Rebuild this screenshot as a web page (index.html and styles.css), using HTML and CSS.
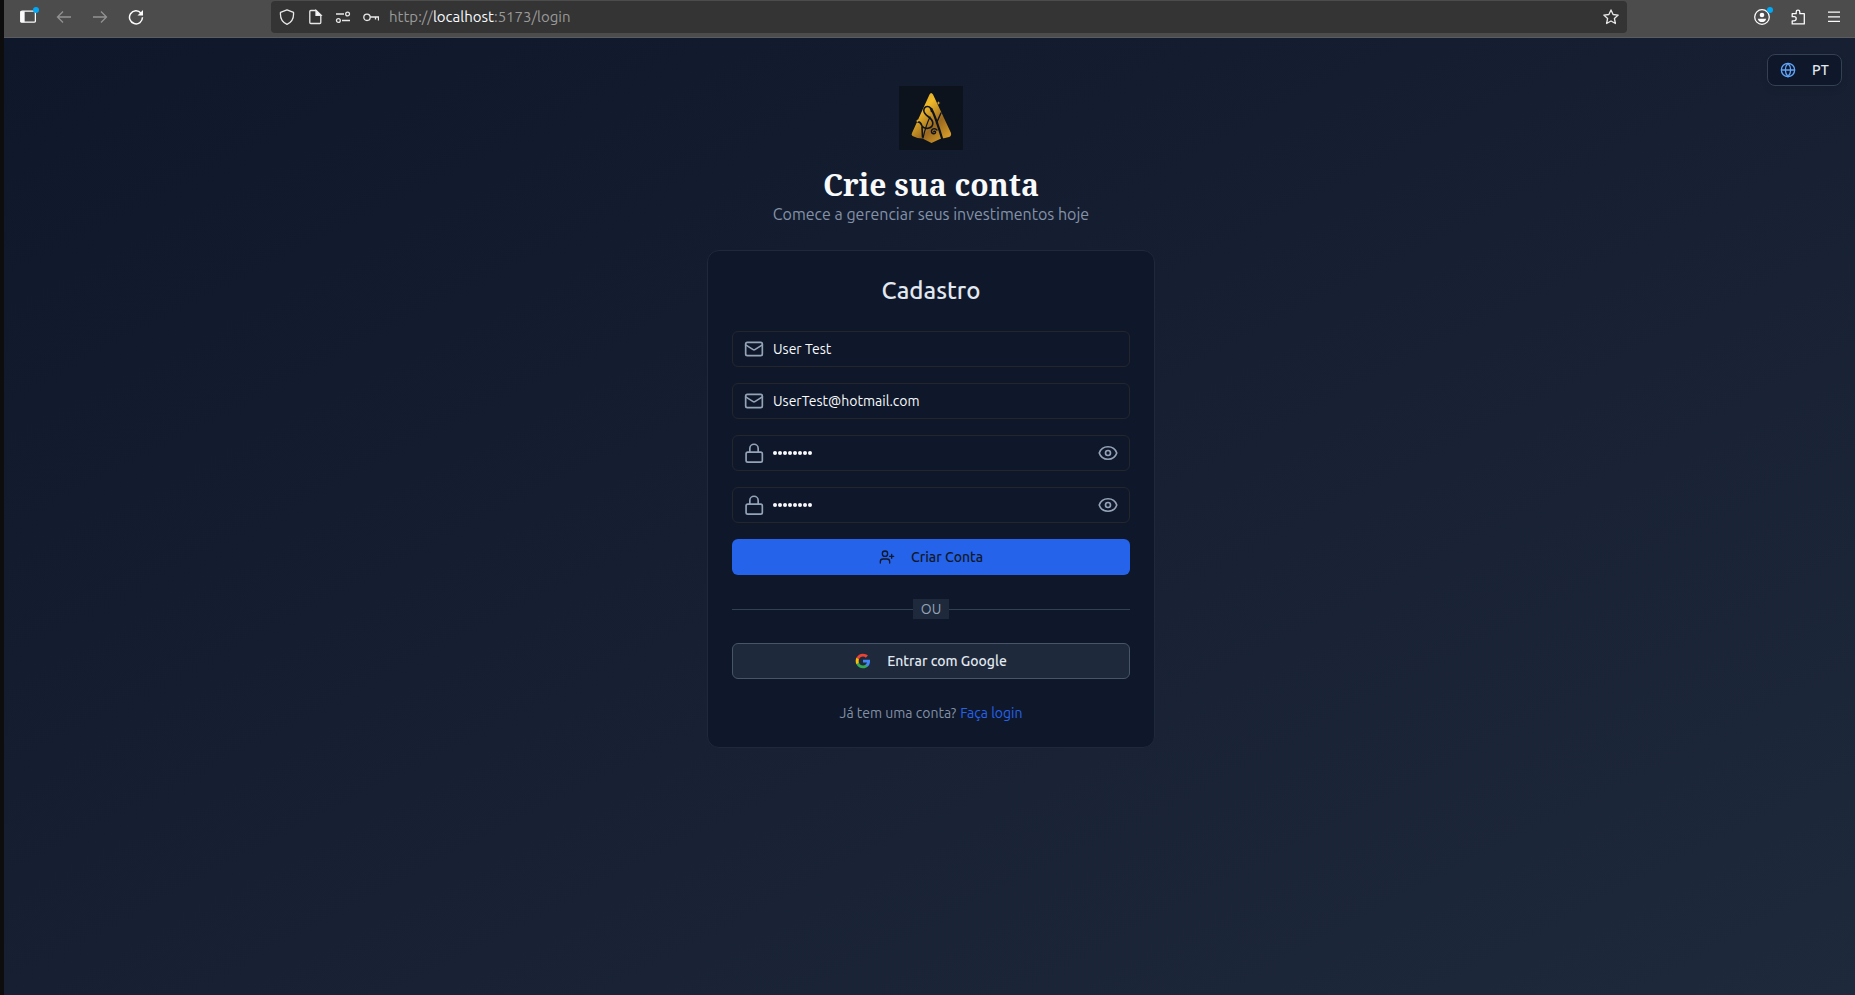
FILE: index.html
```html
<!DOCTYPE html>
<html lang="pt">
<head>
<meta charset="utf-8">
<title>Crie sua conta</title>
<link rel="stylesheet" href="styles.css">
</head>
<body>
<div class="window">
  <header class="toolbar">
    <nav class="nav">
      <span class="dot-wrap"><svg class="ico" viewBox="0 0 16 16" fill="none" stroke="#fbfbfe" stroke-width="1.3"><rect x=".8" y="2.2" width="14.6" height="11" rx="1.3"/><path d="M1 3h3v9.500H1z" fill="#fbfbfe"/></svg><i class="dot"></i></span>
      <svg class="ico dim" viewBox="0 0 16 16"><path d="M15 8H1.500M7 2.500 1.500 8 7 13.500"/></svg>
      <svg class="ico dim" viewBox="0 0 16 16"><path d="M1 8h13.500M9 2.500 14.500 8 9 13.500"/></svg>
      <svg class="ico" viewBox="0 0 16 16"><path d="M13 4.200A6.500 6.500 0 1 0 14.500 8.300" stroke-width="1.500"/><path d="M15 1v5.500H9.500z" fill="#fbfbfe" stroke="none"/></svg>
    </nav>
    <div class="urlbar">
      <svg class="ico" viewBox="0 0 16 16"><path d="M8 .8 14.500 3.400C15 9 12.500 13.500 8 15.400 3.500 13.500 1 9 1.500 3.400z" stroke-linejoin="round"/></svg>
      <svg class="ico" viewBox="0 0 16 16"><path d="M3.800 1.500H9L13.800 6v7.500q0 1-1 1h-9q-1 0-1-1v-11q0-1 1-1z"/><path d="M9 1.500V6.300h5z" fill="#fbfbfe"/></svg>
      <svg class="ico" viewBox="0 0 16 16"><path d="M1 5h8M7 11.500h8"/><circle cx="12.600" cy="5" r="1.900"/><circle cx="3.400" cy="11.500" r="1.900"/></svg>
      <svg class="ico" viewBox="0 0 16 16"><circle cx="4" cy="8.300" r="3.200"/><path d="M7.200 8h8.300v3.500M12.500 8v2.500"/></svg>
      <span class="url">http://<b>localhost</b>:5173/login</span>
      <svg class="ico star" viewBox="0 0 16 16"><path d="m8 .9 2.100 4.600 5.100.6-3.800 3.400 1 5L8 12l-4.400 2.500 1-5L.8 6.100l5.100-.6z" stroke-linejoin="round"/></svg>
    </div>
    <div class="tools">
      <span class="dot-wrap"><svg class="ico" viewBox="0 0 16 16"><circle cx="8" cy="8" r="7.300"/><circle cx="8" cy="6" r="2.300" fill="#fbfbfe" stroke="none"/><path d="M3.800 9.700h8.400q-.8 3.400-4.200 3.400T3.800 9.700z" fill="#fbfbfe" stroke="none"/></svg><i class="dot"></i></span>
      <svg class="ico" viewBox="0 0 16 16"><path d="M2.200 7V4.700h4V3a1.800 1.800 0 0 1 3.600 0v1.700h4.500v10.200H2.200v-3h1.900a2 2 0 0 0 0-4.200H2.200z" stroke-linejoin="round"/></svg>
      <svg class="ico" viewBox="0 0 16 16"><path d="M2 3.200h12M2 7.800h12M2 12.400h12"/></svg>
    </div>
  </header>
  <main class="page">
    <button class="lang"><svg viewBox="0 0 24 24"><circle cx="12" cy="12" r="10"/><path d="M12 2a14.500 14.500 0 0 0 0 20 14.500 14.500 0 0 0 0-20M2 12h20"/></svg><span>PT</span></button>
    <svg class="logo" viewBox="0 0 64 64">
      <defs><linearGradient id="gold" x1="0" y1="0" x2=".75" y2="1"><stop offset="0" stop-color="#d4a12a"/><stop offset=".35" stop-color="#efb92a"/><stop offset=".7" stop-color="#9a6820"/><stop offset="1" stop-color="#d39a29"/></linearGradient></defs>
      <rect width="64" height="64" fill="#0c131c"/>
      <path d="M30.500 8.500Q32 5.500 34 8.500L52 47q.7 3-2 4l-4 1-5 1-8.500 4-9-4.500-5-.500-5-2q-1.500-1-.5-3z" fill="url(#gold)"/>
      <g fill="none" stroke="#0c131c" stroke-linecap="round"><path d="M32.500 25.500C32 19 25 19 24.800 24.500 24.800 30 33.500 31 33.800 37 34 43 25 44 22.800 39.500 22 37.500 20.500 35.500 18.500 36" stroke-width="1.600"/><path d="M31 31Q27 39 24 52" stroke-width="1.200"/><path d="M23 41l.5 10" stroke-width="1.600"/><path d="M32.500 23Q37 32 43.500 54" stroke-width="2.200"/><path d="M42 27l-4.500 10M38 44c-2-2.500-6-1-5.500 2 .5 2.500 4.500 2 4 0-.3-1-1.500-1-1.800-.2" stroke-width="1.400"/></g>
      <path d="m39.500 15 .4 1.600 1.600.4-1.600.4-.4 1.600-.4-1.600-1.600-.4 1.600-.4zM18.500 33l.4 1.600 1.600.4-1.600.4-.4 1.600-.4-1.600-1.600-.4 1.600-.4z" fill="#e6b34a"/>
    </svg>
    <h1 class="title"><span>Crie sua conta</span></h1>
    <p class="subtitle"><span>Comece a gerenciar seus investimentos hoje</span></p>
    <section class="card">
      <h2 class="heading"><span>Cadastro</span></h2>
      <div class="field"><svg class="fi" viewBox="0 0 24 24"><rect x="2" y="4" width="20" height="16" rx="2"/><path d="m22 7-8.970 5.700a1.940 1.940 0 0 1-2.060 0L2 7"/></svg><span>User Test</span></div>
      <div class="field"><svg class="fi" viewBox="0 0 24 24"><rect x="2" y="4" width="20" height="16" rx="2"/><path d="m22 7-8.970 5.700a1.940 1.940 0 0 1-2.060 0L2 7"/></svg><span>UserTest@hotmail.com</span></div>
      <div class="field"><svg class="fi" viewBox="0 0 24 24"><rect x="2.500" y="11" width="19.500" height="12" rx="2"/><path d="M7 11V6.500a5 5 0 0 1 10 0V11"/></svg><span class="dots"><i></i><i></i><i></i><i></i><i></i><i></i><i></i><i></i></span><svg class="fi eye" viewBox="0 0 24 24"><path d="M1.500 12C3 7.500 7 4.500 12 4.500S21 7.500 22.500 12C21 16.500 17 19.500 12 19.500S3 16.500 1.500 12z"/><circle cx="12" cy="12" r="3"/></svg></div>
      <div class="field"><svg class="fi" viewBox="0 0 24 24"><rect x="2.500" y="11" width="19.500" height="12" rx="2"/><path d="M7 11V6.500a5 5 0 0 1 10 0V11"/></svg><span class="dots"><i></i><i></i><i></i><i></i><i></i><i></i><i></i><i></i></span><svg class="fi eye" viewBox="0 0 24 24"><path d="M1.500 12C3 7.500 7 4.500 12 4.500S21 7.500 22.500 12C21 16.500 17 19.500 12 19.500S3 16.500 1.500 12z"/><circle cx="12" cy="12" r="3"/></svg></div>
      <button class="btn primary"><svg viewBox="0 0 24 24"><path d="M16 21v-2a4 4 0 0 0-4-4H6a4 4 0 0 0-4 4v2M19 8v6M22 11h-6"/><circle cx="9" cy="7" r="4"/></svg><span>Criar Conta</span></button>
      <div class="divider"><span>OU</span></div>
      <button class="btn google"><svg viewBox="0 0 24 24"><path d="M22.560 12.250c0-.78-.07-1.530-.2-2.250H12v4.260h5.920c-.26 1.370-1.040 2.530-2.210 3.310v2.770h3.570c2.080-1.920 3.280-4.740 3.280-8.090z" fill="#4285f4"/><path d="M12 23c2.970 0 5.460-.98 7.280-2.660l-3.570-2.770c-.98.66-2.230 1.060-3.710 1.060-2.860 0-5.290-1.930-6.160-4.530H2.180v2.840C3.990 20.530 7.700 23 12 23z" fill="#34a853"/><path d="M5.840 14.090c-.22-.66-.35-1.360-.35-2.090s.13-1.430.35-2.090V7.070H2.180C1.430 8.550 1 10.220 1 12s.43 3.450 1.180 4.930z" fill="#fbbc05"/><path d="M12 5.380c1.620 0 3.060.56 4.210 1.640l3.150-3.150C17.450 2.090 14.970 1 12 1 7.700 1 3.990 3.470 2.180 7.070l3.660 2.840c.87-2.600 3.300-4.530 6.160-4.530z" fill="#ea4335"/></svg><span>Entrar com Google</span></button>
      <p class="foot"><span>Já tem uma conta?</span><a>Faça login</a></p>
    </section>
  </main>
</div>
</body>
</html>
```
FILE: styles.css
```css
* { box-sizing: border-box; margin: 0; padding: 0; }
body { width: 1855px; height: 995px; overflow: hidden; background: #0d0d0d; font-family: Ubuntu, "Noto Sans", sans-serif; }
button { font: inherit; border: 0; }
span { white-space: nowrap; }
.window { margin-left: 4px; width: 1854px; height: 995px; display: flex; flex-direction: column; }
.toolbar { height: 38px; flex: none; display: flex; align-items: flex-start; background: #4c4c4c; border-bottom: 1px solid #5c5c5e; }
.ico { width: 16px; height: 16px; display: block; fill: none; stroke: #fbfbfe; stroke-width: 1.3; flex: none; }
.dim { opacity: .4; }
.nav { display: flex; gap: 20px; padding: 9px 0 0 16px; width: 267px; }
.dot-wrap { position: relative; }
.dot { position: absolute; right: -3px; top: -2px; width: 6px; height: 6px; border-radius: 50%; background: #00a8f5; }
.urlbar { width: 1356px; height: 32px; margin-top: 1px; border-radius: 4px; background: #343434; display: flex; align-items: center; gap: 12px; padding: 0 8px; }
.urlbar .ico { stroke: #e8e8ea; }
.url { font-size: 15px; line-height: 20px; color: #9a9a9a; margin-left: -2px; width: 190px; }
.url b { font-weight: 400; color: #fbfbfe; }
.star { margin-left: auto; }
.tools { display: flex; gap: 20px; padding: 9px 0 0 127px; }
.page { position: relative; flex: 1; background: linear-gradient(to bottom right, #0f172a, #1e293b); display: flex; flex-direction: column; align-items: center; padding-top: 48px; }
.lang { position: absolute; right: 16px; top: 16px; width: 75px; height: 32px; border: 1px solid #334155; border-radius: 8px; background: #0f172a; color: #e2e8f0; display: flex; align-items: center; gap: 16px; padding-left: 12px; font-size: 14px; font-weight: 500; box-shadow: 0 4px 6px rgb(0 0 0 / .1); }
.lang svg { width: 16px; height: 16px; fill: none; stroke: #60a5fa; stroke-width: 2; }
.logo { width: 64px; height: 64px; display: block; margin-bottom: 17px; flex: none; }
.title { font: 700 30px/36px "Noto Serif", "DejaVu Serif Condensed", "DejaVu Serif", serif; color: #f8fafc; }
.subtitle { font-size: 16px; line-height: 24px; color: #8492a8; margin-bottom: 24px; margin-top: -1px; }
.card { width: 448px; height: 498px; border: 1px solid #1e293b; border-radius: 12px; background: #0f172a; padding: 24px; display: flex; flex-direction: column; gap: 16px; }
.heading { font-size: 24px; line-height: 32px; font-weight: 500; color: #e2e8f0; text-align: center; margin-bottom: 8px; }
.field { height: 36px; border: 1px solid #24262b; border-radius: 6px; display: flex; align-items: center; gap: 9px; padding: 0 11px; font-size: 14px; color: #f8fafc; flex: none; }
.fi { width: 20px; height: 20px; fill: none; stroke: #94a3b8; stroke-width: 2; stroke-linecap: round; stroke-linejoin: round; }
.eye { margin-left: auto; }
.dots { display: flex; gap: 1px; }
.dots i { width: 4px; height: 4px; border-radius: 50%; background: #f8fafc; }
.btn { height: 36px; flex: none; border-radius: 6px; display: flex; align-items: center; justify-content: center; gap: 16px; font-size: 14px; font-weight: 500; }
.btn svg { width: 16px; height: 16px; }
.primary { background: #2563eb; color: #111827; }
.primary svg { fill: none; stroke: #111827; stroke-width: 2; stroke-linecap: round; }
.google { background: #1e293b; border: 1px solid #475569; color: #e2e8f0; }
.divider { height: 20px; margin: 8px 0; display: flex; align-items: center; font-size: 14px; line-height: 20px; color: #94a3b8; }
.divider::before, .divider::after { content: ""; flex: 1; height: 1px; background: #334155; }
.divider span { width: 36px; background: #1e293b; text-align: center; }
.foot { margin-top: 8px; font-size: 14px; line-height: 20px; color: #8290a5; display: flex; justify-content: center; gap: 4px; }
.foot a { color: #2563eb; }
```
